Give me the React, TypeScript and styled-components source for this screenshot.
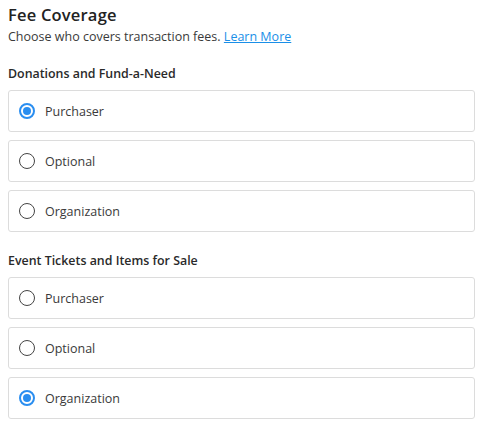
import { createGlobalStyle, styled } from 'styled-components'

const GlobalStyle = createGlobalStyle`
  body {
    margin: 8px;
    background: #ffffff;
    font-family: 'Open Sans', 'Liberation Sans', sans-serif;
    color: #333333;
  }
`

const Wrapper = styled.div`
  display: flex;
  flex-direction: column;
`

const Title = styled.h2`
  margin: 0;
  font-size: 16.5px;
  font-weight: 600;
  line-height: 14px;
  color: #222222;
  letter-spacing: 0.2px;
`

const Subtitle = styled.p`
  margin: 6px 0 0;
  font-size: 12.5px;
  line-height: 18px;
  color: #3a3a3a;
`

const Link = styled.a`
  color: #1a8fe8;
  text-decoration: underline;
  cursor: pointer;
`

const Section = styled.div<{ $top: number }>`
  display: flex;
  flex-direction: column;
  gap: 8px;
  margin-top: ${({ $top }) => $top}px;
`

const SectionLabel = styled.div`
  font-size: 12.4px;
  font-weight: 600;
  line-height: 16px;
  color: #2a2a2a;
`

const OptionCard = styled.label`
  display: flex;
  align-items: center;
  gap: 10px;
  height: 42px;
  box-sizing: border-box;
  padding: 0 10px;
  border: 1px solid #dcdcdc;
  border-radius: 3px;
  font-size: 12.5px;
  color: #3a3a3a;
  cursor: pointer;
`

const RadioCircle = styled.span<{ $checked: boolean }>`
  width: 16px;
  height: 16px;
  flex-shrink: 0;
  box-sizing: border-box;
  border-radius: 50%;
  border: ${({ $checked }) => ($checked ? '2px solid #2a8ef0' : '1.5px solid #444444')};
  display: flex;
  align-items: center;
  justify-content: center;

  &::after {
    content: '';
    width: 8px;
    height: 8px;
    border-radius: 50%;
    background: #2a8ef0;
    display: ${({ $checked }) => ($checked ? 'block' : 'none')};
  }
`

const options = ['Purchaser', 'Optional', 'Organization']

const sections = [
  { label: 'Donations and Fund-a-Need', selected: 'Purchaser', top: 20 },
  { label: 'Event Tickets and Items for Sale', selected: 'Organization', top: 21 },
]

const App = () => {
  return (
    <>
      <GlobalStyle />
      <Wrapper>
        <Title>Fee Coverage</Title>
        <Subtitle>
          Choose who covers transaction fees. <Link>Learn More</Link>
        </Subtitle>
        {sections.map((section) => (
          <Section key={section.label} $top={section.top}>
            <SectionLabel>{section.label}</SectionLabel>
            {options.map((option) => (
              <OptionCard key={option}>
                <RadioCircle $checked={option === section.selected} />
                {option}
              </OptionCard>
            ))}
          </Section>
        ))}
      </Wrapper>
    </>
  )
}

export default App
